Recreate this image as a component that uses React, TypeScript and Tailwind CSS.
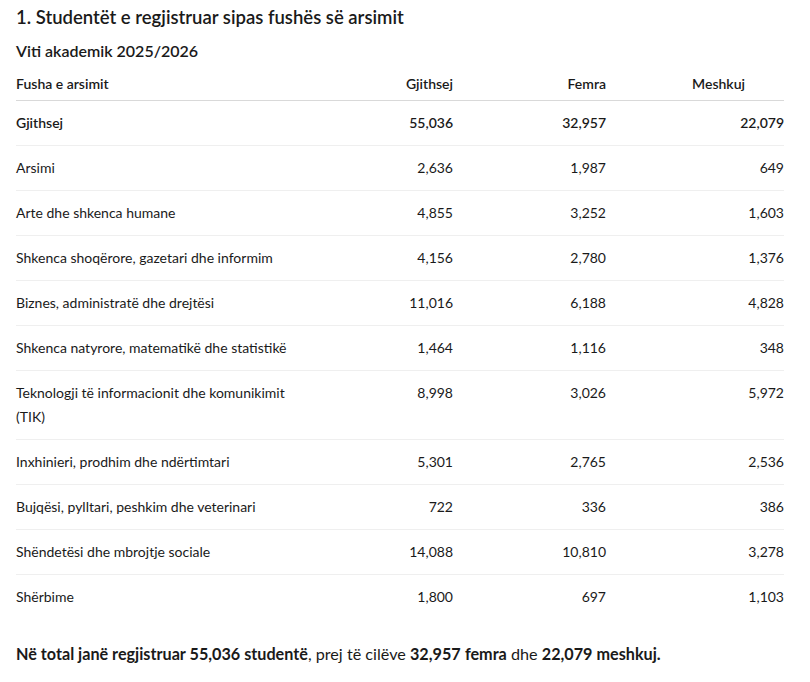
import React from "react";

const rows: [string, string, string, string][] = [
  ["Arsimi", "2,636", "1,987", "649"],
  ["Arte dhe shkenca humane", "4,855", "3,252", "1,603"],
  ["Shkenca shoqërore, gazetari dhe informim", "4,156", "2,780", "1,376"],
  ["Biznes, administratë dhe drejtësi", "11,016", "6,188", "4,828"],
  ["Shkenca natyrore, matematikë dhe statistikë", "1,464", "1,116", "348"],
  ["Teknologji të informacionit dhe komunikimit (TIK)", "8,998", "3,026", "5,972"],
  ["Inxhinieri, prodhim dhe ndërtimtari", "5,301", "2,765", "2,536"],
  ["Bujqësi, pylltari, peshkim dhe veterinari", "722", "336", "386"],
  ["Shëndetësi dhe mbrojtje sociale", "14,088", "10,810", "3,278"],
  ["Shërbime", "1,800", "697", "1,103"],
];

export default function App() {
  return (
    <div
      className="min-h-[682px] bg-white px-4 text-[#1a1a1a]"
      style={{ fontFamily: 'Lato, "Noto Sans", sans-serif' }}
    >
      <h1 className="pt-[5px] text-[18.5px] font-semibold leading-[24px]">
        1. Studentët e regjistruar sipas fushës së arsimit
      </h1>
      <h2 className="mt-[11px] text-[16px] font-semibold leading-[22px]">
        Viti akademik 2025/2026
      </h2>
      <table className="mt-[10px] w-[768px] border-collapse text-[14px] leading-[24px]">
        <colgroup>
          <col className="w-[290px]" />
          <col className="w-[147px]" />
          <col className="w-[153px]" />
          <col className="w-[178px]" />
        </colgroup>
        <thead>
          <tr className="border-b border-[#d9d9d9]">
            <th className="pb-[4px] text-left font-semibold">Fusha e arsimit</th>
            <th className="pb-[4px] text-right font-semibold">Gjithsej</th>
            <th className="pb-[4px] text-right font-semibold">Femra</th>
            <th className="pb-[4px] pr-[39px] text-right font-semibold">Meshkuj</th>
          </tr>
        </thead>
        <tbody>
          <tr className="border-b border-[#efefef] font-semibold">
            <td className="py-[10px] pr-[10px]">Gjithsej</td>
            <td className="py-[10px] text-right">55,036</td>
            <td className="py-[10px] text-right">32,957</td>
            <td className="py-[10px] text-right">22,079</td>
          </tr>
          {rows.map((r, i) => (
            <tr
              key={r[0]}
              className={i === rows.length - 1 ? "" : "border-b border-[#efefef]"}
            >
              <td className="py-[10px] pr-[10px] align-top">{r[0]}</td>
              <td className="py-[10px] text-right align-top">{r[1]}</td>
              <td className="py-[10px] text-right align-top">{r[2]}</td>
              <td className="py-[10px] text-right align-top">{r[3]}</td>
            </tr>
          ))}
        </tbody>
      </table>
      <p className="mt-[24px] text-[16.2px] leading-[22px]">
        <span className="font-bold">Në total janë regjistruar 55,036 studentë</span>, prej të
        cilëve <span className="font-bold">32,957</span>{" "}
        <span className="font-bold">femra</span> dhe{" "}
        <span className="font-bold">22,079 meshkuj.</span>
      </p>
    </div>
  );
}
